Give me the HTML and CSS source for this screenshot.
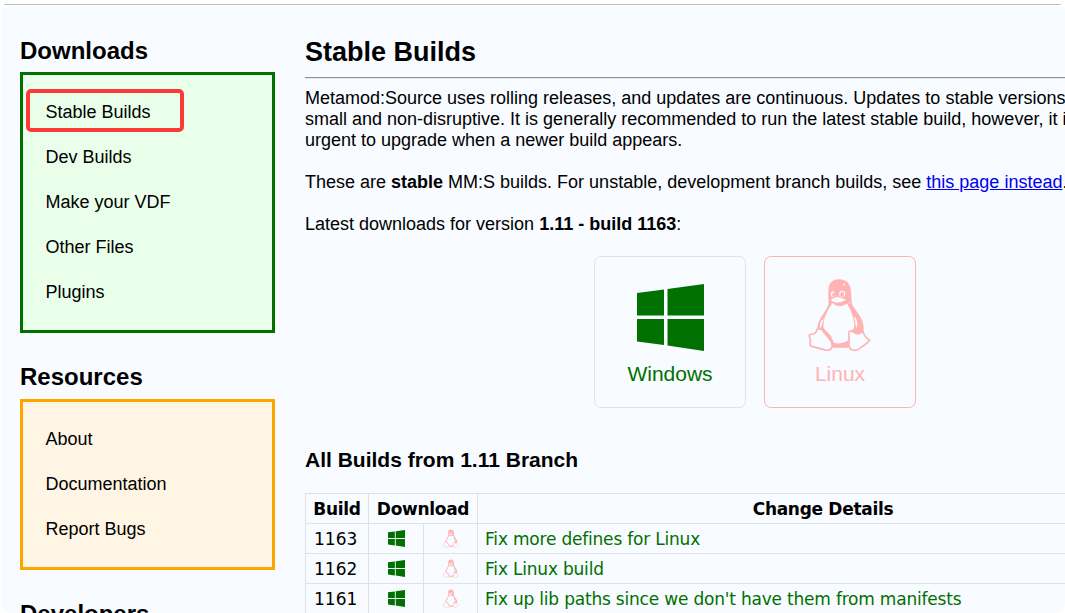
FILE: index.html
```html
<!DOCTYPE html>
<html lang="en">
<head>
<meta charset="utf-8">
<title>Stable Builds</title>
<link rel="stylesheet" href="styles.css">
</head>
<body>
<svg class="defs" aria-hidden="true">
  <symbol id="win" viewBox="0 0 67 67">
    <path d="M0 9 27 5.500V31.500H0ZM30.500 5 67 0V31.500H30.500ZM0 35H27V61L0 57.500ZM30.500 35H67V67L30.500 61.500Z"/>
  </symbol>
  <symbol id="tux" viewBox="24 24 190 222">
    <path d="M86 103C86 85 84 73 86 55C88 36 100 27 118 27C138 27 150 38 153 57C156 78 153 94 160 108C170 126 193 148 192 174C192 185 185 193 174 193C167 193 159 188 155 182L148 219C150 228 148 234 140 234H102C94 234 92 229 93 221C86 207 69 190 52 175C54 156 61 144 70 132C74 124 82 115 86 103Z"/>
    <path class="paper" d="M92 107C83 122 73 142 71 159C69 172 72 177 80 184C89 192 98 203 101 218C119 224 138 219 147 209C151 198 148 186 155 180C163 178 165 171 163 158C160 137 153 119 142 100C129 108 117 112 105 104L99 99Z"/>
    <path class="paper" d="M65 151C59 162 58 170 62 176C66 165 67 158 72 147ZM167 142C174 155 174 166 170 174C166 166 168 157 163 142ZM144 94l7 5 1 5Z"/>
    <ellipse class="paper" cx="99" cy="72" rx="6" ry="9"/>
    <ellipse class="paper" cx="127" cy="72" rx="9" ry="10"/>
    <ellipse cx="101" cy="74" rx="4" ry="6"/>
    <ellipse cx="127" cy="73" rx="6" ry="8"/>
    <path class="paper" d="M95 87 111 80 138 88C133 95 120 97 109 98L95 93Z"/>
    <path class="line" d="M97 95Q112 106 136 92"/>
    <circle class="paper" cx="133" cy="43" r="3"/>
    <path class="foot" d="M51 179C58 176 64 177 68 182C77 195 92 209 96 220C101 235 90 243 77 241C64 237 47 233 33 229C27 226 31 218 32 211C28 201 25 193 33 193C43 193 49 188 51 179ZM151 183C159 182 162 190 172 192C181 192 186 188 190 184C192 201 203 204 210 211C205 221 189 227 180 236C171 245 152 243 148 231C145 218 151 208 147 198C146 191 147 185 151 183Z"/>
  </symbol>
</svg>
<div class="rule"></div>
<div class="page">
  <aside class="sidebar">
    <h2 class="first">Downloads</h2>
    <ul class="menu green">
      <li class="current">Stable Builds</li><li>Dev Builds</li><li>Make your VDF</li><li>Other Files</li><li>Plugins</li>
    </ul>
    <h2>Resources</h2>
    <ul class="menu orange">
      <li>About</li><li>Documentation</li><li>Report Bugs</li>
    </ul>
    <h2>Developers</h2>
  </aside>
  <main class="content">
    <h1>Stable Builds</h1>
    <hr>
    <p>Metamod:Source uses rolling releases, and updates are continuous. Updates to stable versions<br>small and non-disruptive. It is generally recommended to run the latest stable build, however, it is<br>urgent to upgrade when a newer build appears.</p>
    <p>These are <b>stable</b> MM:S builds. For unstable, development branch builds, see <a href="#">this page instead</a>.</p>
    <p>Latest downloads for version <b>1.11 - build 1163</b>:</p>
    <div class="cards">
      <div class="card windows"><svg class="big-win"><use href="#win"/></svg><span>Windows</span></div>
      <div class="card linux"><svg class="big-tux"><use href="#tux"/></svg><span>Linux</span></div>
    </div>
    <h3>All Builds from 1.11 Branch</h3>
    <table>
      <colgroup><col class="c-build"><col class="c-win"><col class="c-linux"><col></colgroup>
      <tr><th>Build</th><th colspan="2">Download</th><th>Change Details</th></tr>
      <tr><td>1163</td><td class="icon"><svg class="small-win"><use href="#win"/></svg></td><td class="icon"><svg class="small-tux"><use href="#tux"/></svg></td><td class="change">Fix more defines for Linux</td></tr>
      <tr><td>1162</td><td class="icon"><svg class="small-win"><use href="#win"/></svg></td><td class="icon"><svg class="small-tux"><use href="#tux"/></svg></td><td class="change">Fix Linux build</td></tr>
      <tr><td>1161</td><td class="icon"><svg class="small-win"><use href="#win"/></svg></td><td class="icon"><svg class="small-tux"><use href="#tux"/></svg></td><td class="change">Fix up lib paths since we don't have them from manifests</td></tr>
    </table>
  </main>
</div>
</body>
</html>
```
FILE: styles.css
```css
*, *::after { box-sizing: border-box; }
body {
  margin: 0;
  height: 613px;
  overflow: hidden;
  background: #fff;
  color: #000;
  font: 18px/21px "Liberation Sans", Arial, sans-serif;
}
.defs { display: none; }
.rule { height: 1px; margin: 4px 4px 2px; background: #c0c0c0; }
.page {
  display: flex;
  height: 606px;
  margin-left: 1px;
  padding-left: 19px;
  overflow: hidden;
  background: #f8fbff;
  border-radius: 4px 4px 10px 10px;
}
h1, h2, h3, p { margin: 0; }
.sidebar { flex: none; width: 255px; padding-top: 29px; }
h2 { font-size: 24px; line-height: 28px; margin-bottom: 8px; }
h2.first { padding-top: 1px; margin-bottom: 7px; }
.menu { list-style: none; margin: 0 0 30px; padding: 15px 22.500px; border: 3px solid; }
.menu li { height: 45px; line-height: 45px; }
.green { border-color: #007000; background: #eaffea; }
.orange { border-color: #ffa500; background: #fff5e4; }
.current { position: relative; }
.current::after {
  content: "";
  position: absolute;
  left: -20px;
  top: -1px;
  width: 158px;
  height: 43px;
  border: 4px solid #fd3a3a;
  border-radius: 5px;
}
.content { flex: none; width: 863px; margin-left: 30px; padding-top: 30px; white-space: nowrap; }
h1 { font-size: 27px; line-height: 31px; }
hr { height: 2px; margin: 9px 0; border: 0; border-top: 1px solid #8f9297; border-bottom: 1px solid #e6e9ed; }
p { margin-bottom: 21px; }
.cards { display: flex; gap: 18px; margin: 0 0 40px 289px; }
.card {
  display: flex;
  flex-direction: column;
  align-items: center;
  width: 152px;
  height: 152px;
  border: 1px solid #e0e2e6;
  border-radius: 7px;
  font-size: 21px;
  line-height: 24px;
}
.windows { padding-top: 27px; color: #007000; fill: #007000; }
.linux { padding-top: 21px; color: #ffb3b3; fill: #ffb3b3; border-color: #ffb3b3; }
.big-win { width: 67px; height: 67px; margin-bottom: 11px; }
.big-tux { width: 63px; height: 74px; margin: 0 2px 10px 0; }
.paper { fill: #f8fbff; }
.line { fill: none; stroke: #ffb3b3; stroke-width: 3; }
.foot { fill: #f8fbff; stroke: #ffb3b3; stroke-width: 5; }
h3 { font-size: 21px; line-height: 24px; margin-bottom: 21px; }
table {
  width: 864px;
  table-layout: fixed;
  border-collapse: collapse;
  font: 17px/20px "DejaVu Sans", Verdana, sans-serif;
}
th, td { height: 30px; padding: 0 0 0 8px; border: 1px solid #dee2e6; text-align: left; }
th { padding: 0; text-align: center; letter-spacing: -0.3px; }
.c-build { width: 63px; }
.c-win { width: 55px; }
.c-linux { width: 54px; }
.icon { padding: 0; text-align: center; }
.icon svg { display: block; margin: 0 auto; }
.small-win { width: 17px; height: 17px; fill: #007000; }
.small-tux { width: 16px; height: 19px; fill: #ffb3b3; }
.change { padding-left: 7px; color: #007000; letter-spacing: -0.2px; }
```
